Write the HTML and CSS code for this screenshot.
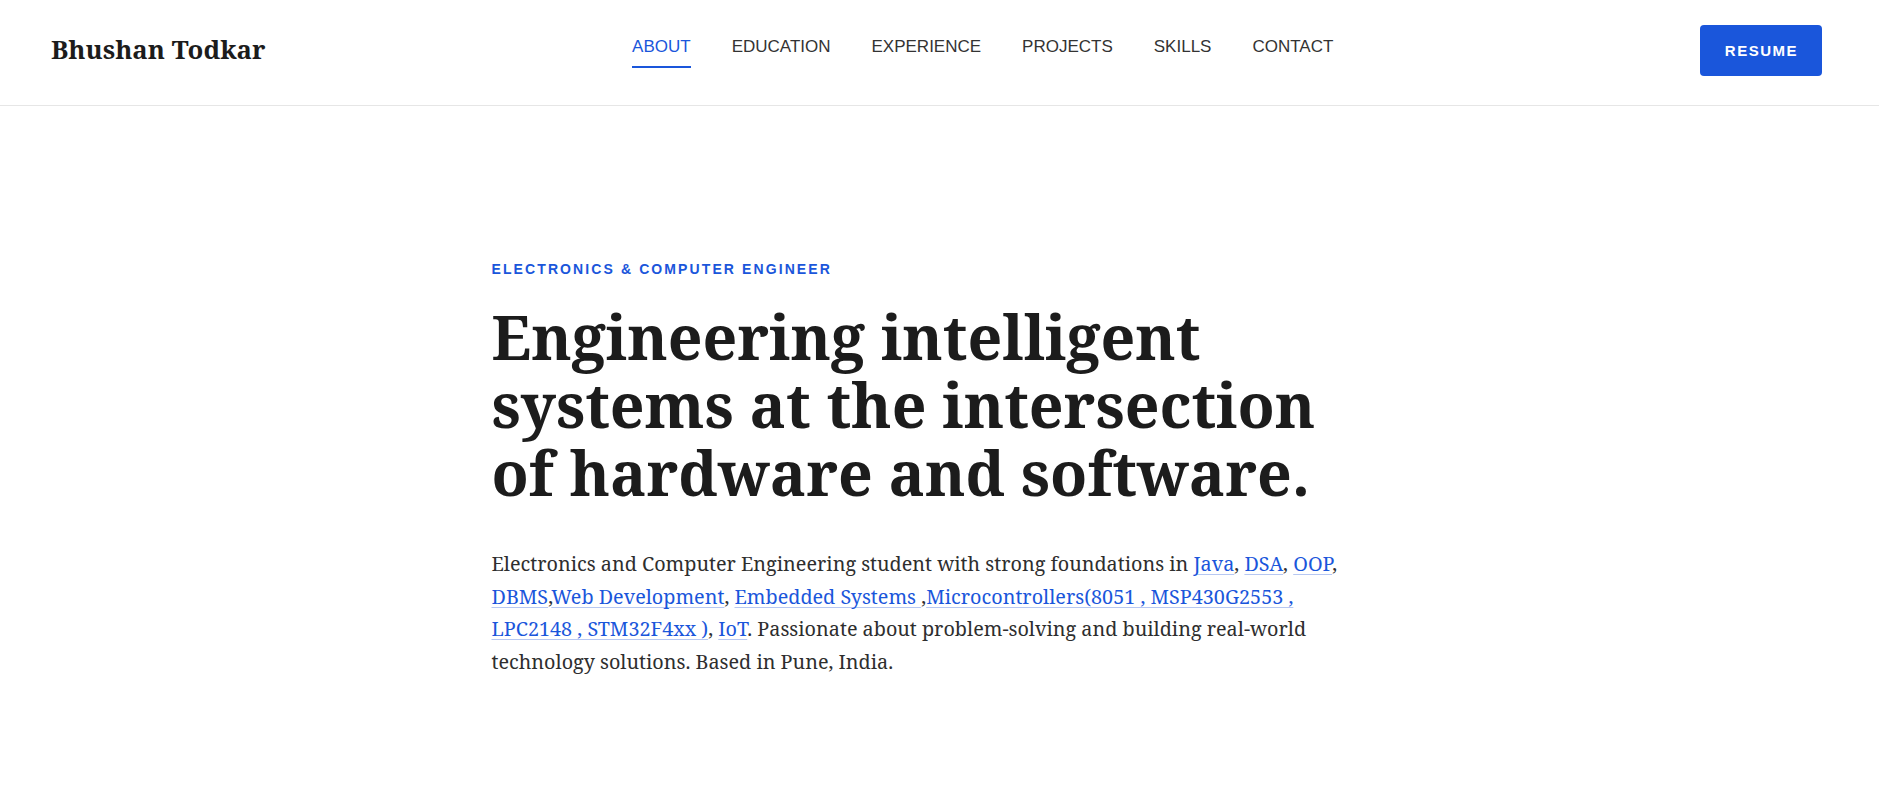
FILE: index.html
```html
<!DOCTYPE html>
<html lang="en">
<head>
<meta charset="utf-8">
<title>Bhushan Todkar</title>
<link rel="stylesheet" href="styles.css">
</head>
<body>
<header class="site-header">
  <a class="logo" href="#">Bhushan Todkar</a>
  <nav class="nav">
    <a class="nav-link active" href="#about">ABOUT</a>
    <a class="nav-link" href="#education">EDUCATION</a>
    <a class="nav-link" href="#experience">EXPERIENCE</a>
    <a class="nav-link" href="#projects">PROJECTS</a>
    <a class="nav-link" href="#skills">SKILLS</a>
    <a class="nav-link" href="#contact">CONTACT</a>
  </nav>
  <a class="btn-resume" href="#">RESUME</a>
</header>
<main class="hero">
  <div class="hero-inner">
    <p class="eyebrow">ELECTRONICS &amp; COMPUTER ENGINEER</p>
    <h1 class="hero-title">Engineering intelligent systems at the intersection of hardware and software.</h1>
    <p class="hero-text">Electronics and Computer Engineering student with strong foundations in <a href="#">Java</a>, <a href="#">DSA</a>, <a href="#">OOP</a>, <a href="#">DBMS</a>,<a href="#">Web Development</a>, <a href="#">Embedded Systems </a>,<a href="#">Microcontrollers(8051 , MSP430G2553 , LPC2148 , STM32F4xx )</a>, <a href="#">IoT</a>. Passionate about problem-solving and building real-world technology solutions. Based in Pune, India.</p>
  </div>
</main>
</body>
</html>
```
FILE: styles.css
```css
* { box-sizing: border-box; }
html, body { margin: 0; padding: 0; background: #ffffff; }
body { font-family: "Noto Serif", Georgia, "DejaVu Serif", serif; color: #1c1c1c; }
a { text-decoration: none; color: inherit; }

.site-header {
  display: flex;
  align-items: center;
  justify-content: space-between;
  height: 106px;
  padding: 0 57px 0 51px;
  border-bottom: 1px solid #e6e6e6;
}
.logo {
  font-family: "Noto Serif", Georgia, serif;
  font-weight: 700;
  font-size: 25.8px;
  line-height: 1;
  padding-bottom: 5px;
  color: #1c1c1c;
}
.nav { display: flex; gap: 41px; }
.nav-link {
  font-family: "Liberation Sans", Arial, sans-serif;
  font-size: 17px;
  line-height: 19px;
  color: #333333;
  padding-bottom: 10px;
  border-bottom: 2px solid transparent;
}
.nav-link.active { color: #1a56db; border-bottom-color: #1a56db; }
.btn-resume {
  font-family: "Liberation Sans", Arial, sans-serif;
  font-weight: 700;
  font-size: 15px;
  letter-spacing: 1.5px;
  line-height: 17px;
  color: #ffffff;
  background: #1a56db;
  border-radius: 4px;
  padding: 17px 24px 17px 25px;
  margin-bottom: 4px;
}

.hero { padding-top: 153px; }
.hero-inner { max-width: 896px; margin: 0 auto; }
.eyebrow {
  margin: 0;
  font-family: "Liberation Sans", Arial, sans-serif;
  font-weight: 700;
  font-size: 14px;
  line-height: 20px;
  letter-spacing: 2.1px;
  color: #1a56db;
}
.hero-title {
  margin: 24px 0 0;
  max-width: 860px;
  font-size: 60.8px;
  line-height: 68px;
  font-weight: 700;
  color: #1c1c1c;
}
.hero-text {
  margin: 41px 0 0;
  max-width: 856px;
  font-size: 19.8px;
  line-height: 32.7px;
  color: #2e2e2e;
}
.hero-text a {
  color: #1a56db;
  text-decoration: underline;
  text-decoration-color: #b7c8f2;
  text-decoration-thickness: 1px;
  text-underline-offset: 3px;
  text-decoration-skip-ink: none;
}
```
